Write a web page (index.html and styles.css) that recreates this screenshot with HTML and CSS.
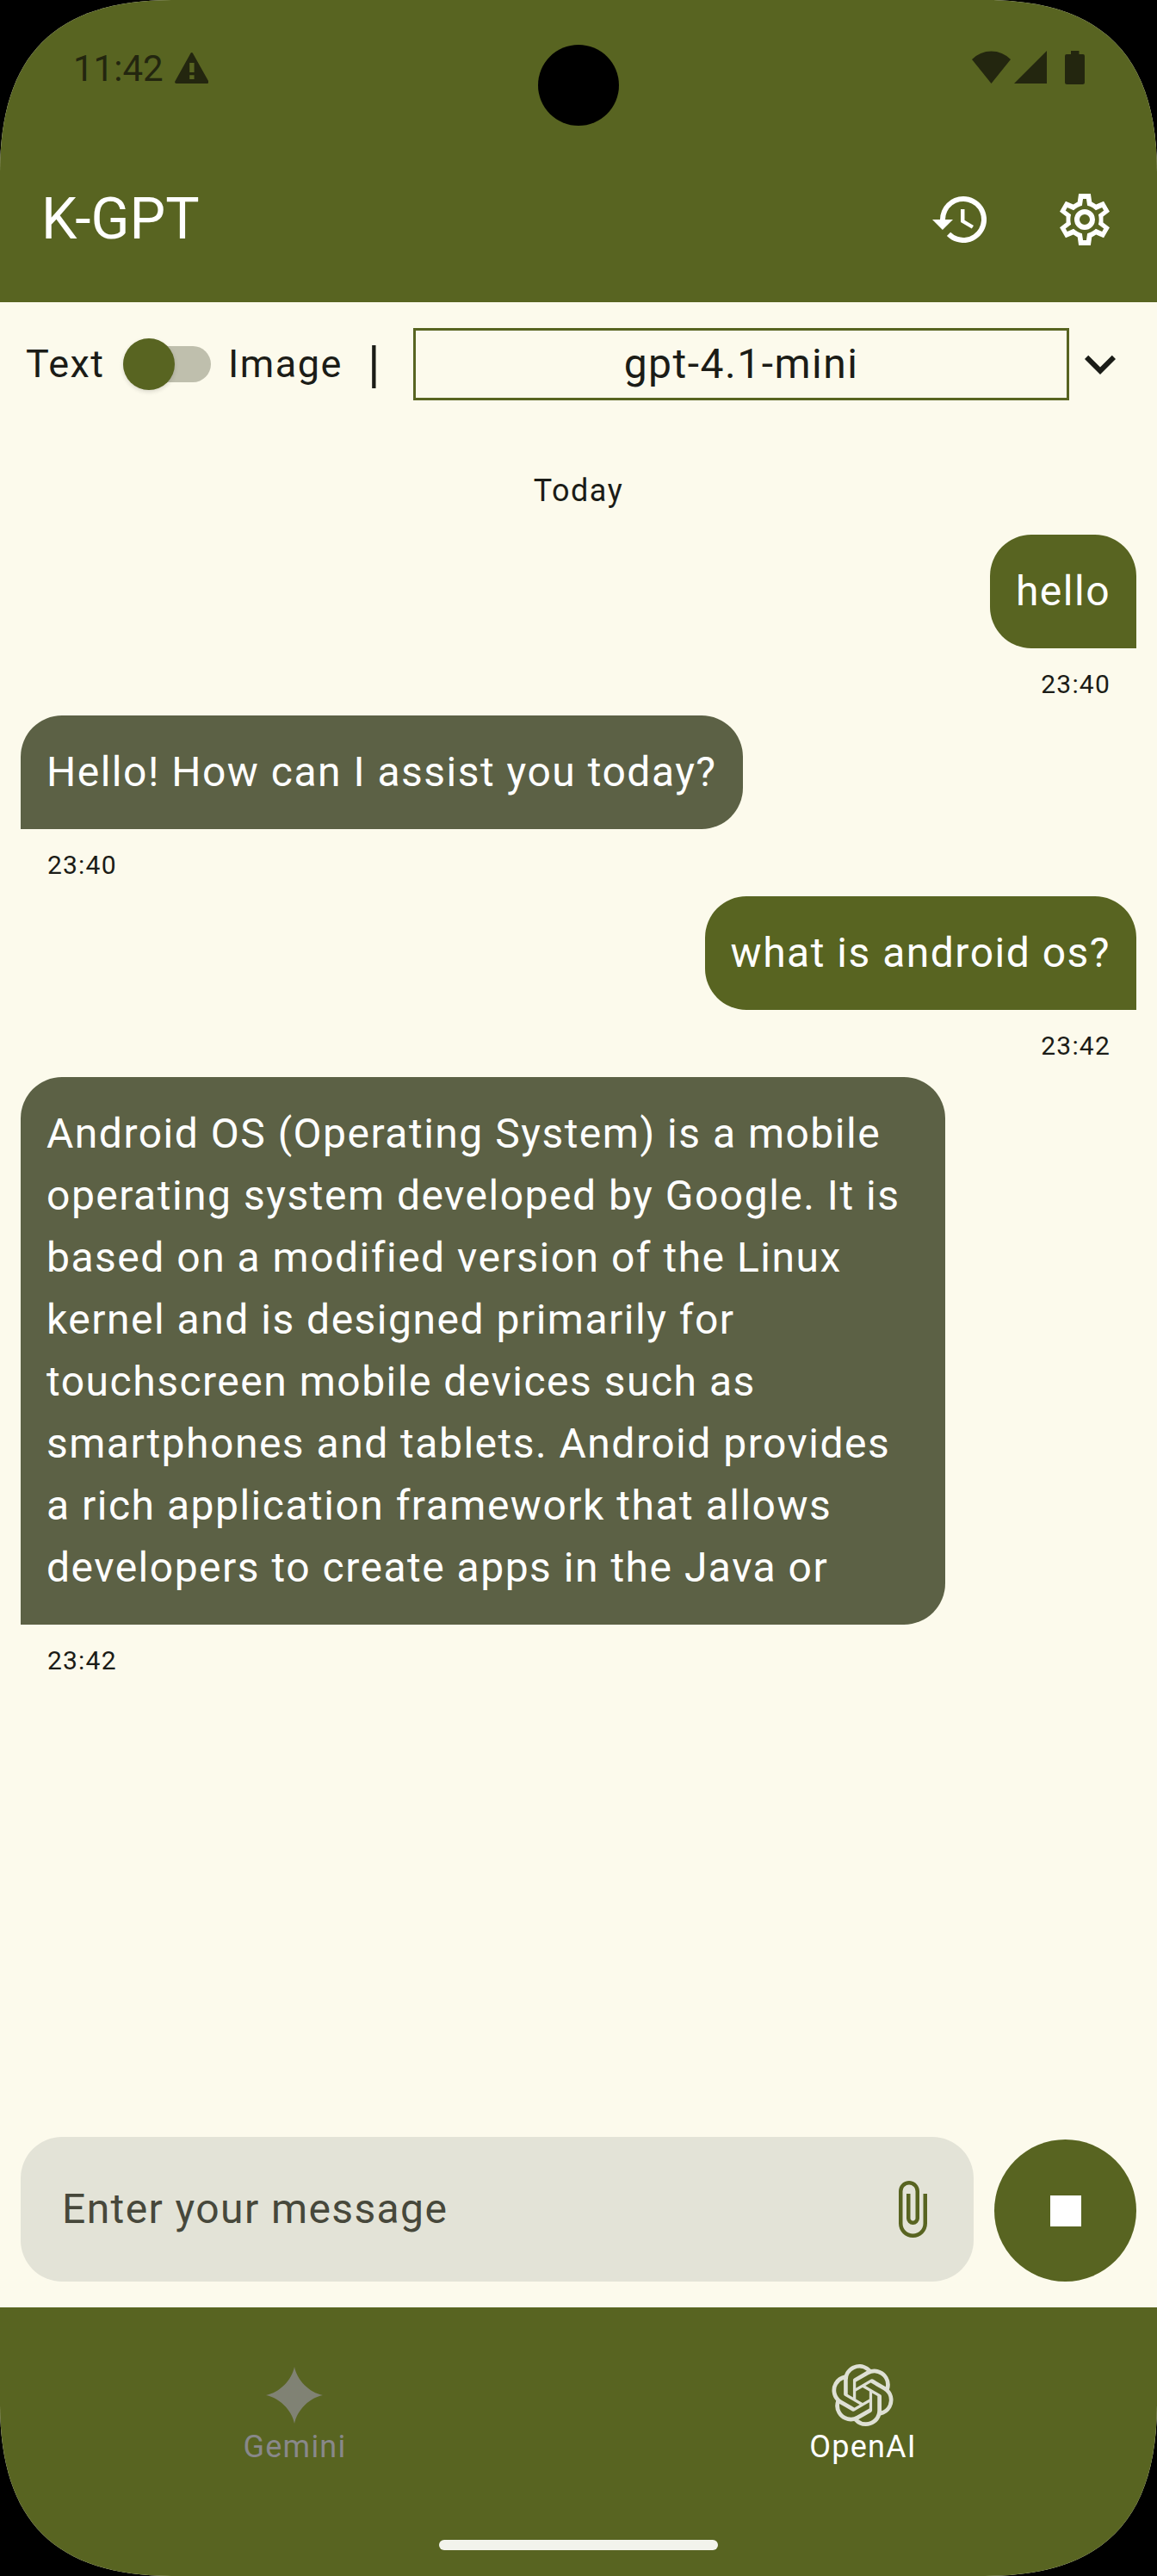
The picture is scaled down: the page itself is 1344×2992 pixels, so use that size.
FILE: index.html
```html
<!DOCTYPE html>
<html lang="en">
<head>
<meta charset="utf-8">
<title>K-GPT</title>
<link rel="stylesheet" href="styles.css">
</head>
<body>
<div class="phone">
  <header class="top">
    <div class="status">
      <div class="status-left">
        <span class="clock">11:42</span>
        <svg class="warn" viewBox="0 0 39.5 36"><path fill-rule="evenodd" d="M19.7 0 Q20.6 0 21.2 1.2 L39.2 33.4 Q40 36 37.6 36 H1.9 Q-.5 36 .3 33.4 L18.2 1.2 Q18.8 0 19.7 0 Z M17.2 12 V23 H22.6 V12 Z M17.2 26.2 V31 H22.6 V26.2 Z"/></svg>
      </div>
      <div class="status-right">
        <svg class="wifi" viewBox="0 0 45 38"><path d="M0 10 A31.5 31.5 0 0 1 45 10 L22.5 38 Z"/></svg>
        <svg class="signal" viewBox="0 0 38 38"><path d="M38 0 V38 H0 Z"/></svg>
        <svg class="battery" viewBox="0 0 23 39"><path d="M7 0 H16.500 V4 H21 Q23 4 23 6 V36.500 Q23 39 20.500 39 H2.500 Q0 39 0 36.500 V6 Q0 4 2 4 H7 Z"/></svg>
      </div>
      <div class="camera"></div>
    </div>
    <div class="appbar">
      <h1>K-GPT</h1>
      <div class="actions">
        <svg class="icon" viewBox="0 0 24 24"><path d="M13 3a9 9 0 0 0-9 9H1l3.890 3.890.070.140L9 12H6a7 7 0 1 1 2.060 4.940l-1.420 1.420A9 9 0 1 0 13 3zm-1 5v5l4.280 2.540.720-1.210-3.500-2.080V8H12z"/></svg>
        <svg class="icon" viewBox="0 0 24 24"><path fill-rule="evenodd" d="M9.700 2H14.300L14.750 5.200L16.400 6.150L19.350 4.950L21.650 8.900L19.150 10.800V13.200L21.650 15.100L19.350 19.050L16.400 17.850L14.750 18.800L14.300 22H9.700L9.250 18.800L7.600 17.850L4.650 19.050L2.350 15.100L4.850 13.200V10.800L2.350 8.900L4.650 4.950L7.600 6.150L9.250 5.200Z M11.350 4L10.970 6.600C9.700 6.950 8.600 7.550 7.700 8.400L5.270 7.370L4.600 8.500L6.700 10.100C6.350 11.350 6.350 12.650 6.700 13.900L4.600 15.500L5.270 16.630L7.700 15.600C8.600 16.450 9.700 17.050 10.970 17.400L11.350 20H12.650L13.030 17.400C14.300 17.050 15.400 16.450 16.300 15.600L18.730 16.630L19.400 15.500L17.300 13.900C17.650 12.650 17.650 11.350 17.300 10.100L19.400 8.500L18.730 7.370L16.300 8.400C15.400 7.550 14.300 6.950 13.030 6.600L12.650 4Z M12 8a4 4 0 1 1 0 8a4 4 0 1 1 0-8Z M12 10a2 2 0 1 0 0 4a2 2 0 1 0 0-4Z"/></svg>
      </div>
    </div>
  </header>

  <section class="toolbar">
    <span class="mode">Text</span>
    <span class="switch"><span class="thumb"></span></span>
    <span class="mode image">Image</span>
    <span class="divider">|</span>
    <div class="model">gpt-4.1-mini</div>
    <svg class="icon chevron" viewBox="0 0 24 24"><path d="M16.590 8.590L12 13.170 7.410 8.590 6 10l6 6 6-6z"/></svg>
  </section>

  <main class="chat">
    <div class="day">Today</div>
    <div class="msg mine"><div class="bubble">hello</div><time>23:40</time></div>
    <div class="msg"><div class="bubble">Hello! How can I assist you today?</div><time>23:40</time></div>
    <div class="msg mine"><div class="bubble">what is android os?</div><time>23:42</time></div>
    <div class="msg"><div class="bubble">Android OS (Operating System) is a mobile operating system developed by Google. It is based on a modified version of the Linux kernel and is designed primarily for touchscreen mobile devices such as smartphones and tablets. Android provides a rich application framework that allows developers to create apps in the Java or</div><time>23:42</time></div>
  </main>

  <section class="composer">
    <div class="field">
      <span>Enter your message</span>
      <svg class="icon" viewBox="0 0 24 24"><path d="M16.500 6v11.500c0 2.210-1.790 4-4 4s-4-1.790-4-4V5a2.500 2.500 0 0 1 5 0v10.500c0 .550-.450 1-1 1s-1-.450-1-1V6H10v9.500a2.500 2.500 0 0 0 5 0V5c0-2.210-1.790-4-4-4S7 2.790 7 5v12.500c0 3.040 2.460 5.500 5.500 5.500s5.500-2.460 5.500-5.500V6h-1.500z"/></svg>
    </div>
    <div class="stop"><span></span></div>
  </section>

  <footer class="bottom">
    <nav class="tabs">
      <div class="tab">
        <svg class="icon gemini" viewBox="0 0 24 24"><path d="M12 1C13 6.200 17.800 11 23 12C17.800 13 13 17.800 12 23C11 17.800 6.200 13 1 12C6.200 11 11 6.200 12 1Z"/></svg>
        <span>Gemini</span>
      </div>
      <div class="tab active">
        <svg class="icon" viewBox="0 0 24 24"><path d="M22.282 9.821a5.985 5.985 0 0 0-.516-4.910 6.046 6.046 0 0 0-6.510-2.900A6.065 6.065 0 0 0 4.981 4.182a5.985 5.985 0 0 0-3.998 2.900 6.046 6.046 0 0 0 .743 7.097 5.980 5.980 0 0 0 .510 4.911 6.051 6.051 0 0 0 6.515 2.900A5.985 5.985 0 0 0 13.260 24a6.056 6.056 0 0 0 5.772-4.206 5.990 5.990 0 0 0 3.997-2.900 6.056 6.056 0 0 0-.747-7.073zM13.260 22.430a4.476 4.476 0 0 1-2.876-1.040l.141-.081 4.779-2.758a.795.795 0 0 0 .392-.681v-6.737l2.020 1.168a.071.071 0 0 1 .038.052v5.583a4.504 4.504 0 0 1-4.494 4.494zM3.600 18.304a4.470 4.470 0 0 1-.535-3.014l.142.085 4.783 2.759a.771.771 0 0 0 .780 0l5.843-3.369v2.332a.080.080 0 0 1-.033.062L9.740 19.950a4.500 4.500 0 0 1-6.140-1.646zM2.340 7.896a4.485 4.485 0 0 1 2.366-1.973V11.600a.766.766 0 0 0 .388.676l5.815 3.355-2.020 1.168a.076.076 0 0 1-.071 0l-4.830-2.786A4.504 4.504 0 0 1 2.340 7.872zm16.597 3.855l-5.833-3.387L15.119 7.200a.076.076 0 0 1 .071 0l4.830 2.791a4.494 4.494 0 0 1-.676 8.105v-5.678a.790.790 0 0 0-.407-.667zm2.010-3.023l-.141-.085-4.774-2.782a.776.776 0 0 0-.785 0L9.409 9.230V6.897a.066.066 0 0 1 .028-.061l4.830-2.787a4.500 4.500 0 0 1 6.680 4.660zm-12.640 4.135l-2.020-1.164a.080.080 0 0 1-.038-.057V6.075a4.500 4.500 0 0 1 7.375-3.453l-.142.080L8.704 5.460a.795.795 0 0 0-.393.681zm1.097-2.365l2.602-1.500 2.607 1.500v2.999l-2.597 1.500-2.607-1.500z"/></svg>
        <span>OpenAI</span>
      </div>
    </nav>
    <div class="home"></div>
  </footer>
</div>
</body>
</html>
```
FILE: styles.css
```css
* { box-sizing: border-box; }
body { margin: 0; background: #000; font-family: Roboto, sans-serif; color: #1b1c17; }
svg { display: block; fill: currentColor; flex: none; }
.phone {
  width: 1344px; height: 2992px; display: flex; flex-direction: column; background: #fcfaec; letter-spacing: 1.5px;
  clip-path: path("M0 200 C0 64 64 0 200 0 H1144 C1280 0 1344 64 1344 200 V2792 C1344 2928 1280 2992 1144 2992 H200 C64 2992 0 2928 0 2792 Z");
}
.icon { width: 72px; height: 72px; }

.top { height: 351px; background: #586421; color: #fff; }
.status { position: relative; height: 159px; display: flex; justify-content: space-between; padding: 59px 84px 0 85px; color: #23260f; }
.status-left, .status-right { display: flex; align-items: flex-start; }
.clock { font-size: 42px; line-height: 42px; letter-spacing: 0; }
.warn { width: 39.5px; height: 36px; margin: 2px 0 0 13px; }
.wifi { width: 45px; height: 38px; margin-right: 4px; }
.signal { width: 38px; height: 38px; margin-right: 21px; }
.battery { width: 23px; height: 39px; }
.camera { position: absolute; left: 625px; top: 52px; width: 94px; height: 94px; border-radius: 50%; background: #000; }
.appbar { height: 192px; display: flex; align-items: center; justify-content: space-between; padding: 0 48px; }
.appbar h1 { margin: 0; font-size: 66px; line-height: 84px; font-weight: 400; letter-spacing: 0; }
.actions { display: flex; gap: 72px; }

.toolbar { height: 144px; display: flex; align-items: center; padding-left: 30px; }
.mode { width: 113px; font-size: 45px; line-height: 60px; }
.switch { width: 102px; height: 42px; border-radius: 21px; background: #bfbfad; display: flex; align-items: center; }
.thumb { width: 60px; height: 60px; border-radius: 50%; background: #586421; flex: none; box-shadow: 0 2px 5px rgba(0,0,0,.14); }
.image { width: 162px; margin-left: 20px; }
.divider { width: 53px; font-size: 60px; line-height: 72px; }
.model { width: 762px; height: 84px; border: 3px solid #586421; text-align: center; font-size: 48px; line-height: 78px; }

.chat { flex: 1; display: flex; flex-direction: column; padding: 0 24px; }
.day { margin: 39px 0 15px; text-align: center; font-size: 36px; line-height: 72px; }
.msg { display: flex; flex-direction: column; align-items: flex-start; }
.mine { align-items: flex-end; }
.bubble { max-width: 1074px; padding: 30px; font-size: 48px; line-height: 72px; color: #fff; background: #5c6145; border-radius: 48px 48px 48px 0; }
.mine .bubble { background: #586421; border-radius: 48px 48px 0 48px; }
.msg time { margin-top: 6px; padding: 0 30px 0 31px; font-size: 30px; line-height: 72px; letter-spacing: 1.2px; }

.composer { display: flex; align-items: flex-end; gap: 24px; padding: 0 24px 30px; }
.field { flex: 1; height: 168px; padding: 0 36px 0 48px; border-radius: 48px; background: #e3e3d7; display: flex; align-items: center; justify-content: space-between; font-size: 48px; letter-spacing: 1.4px; color: #47483b; }
.field span { padding-bottom: 2px; }
.field .icon { color: #586421; }
.stop { width: 165px; height: 165px; border-radius: 50%; background: #586421; display: flex; align-items: center; justify-content: center; }
.stop span { width: 36px; height: 36px; background: #fff; }

.bottom { height: 312px; background: #586421; display: flex; flex-direction: column; align-items: center; }
.tabs { align-self: stretch; display: flex; height: 270px; padding: 66px 12px 0; }
.tab { flex: 1; display: flex; flex-direction: column; align-items: center; font-size: 36px; line-height: 48px; letter-spacing: 1.2px; color: #88888a; }
.tab span { padding-left: 1px; }
.gemini { color: #808274; }
.active { color: #fff; }
.active .icon { color: #dee0d4; }
.home { width: 324px; height: 12px; border-radius: 6px; background: #f2f3ec; }
```
